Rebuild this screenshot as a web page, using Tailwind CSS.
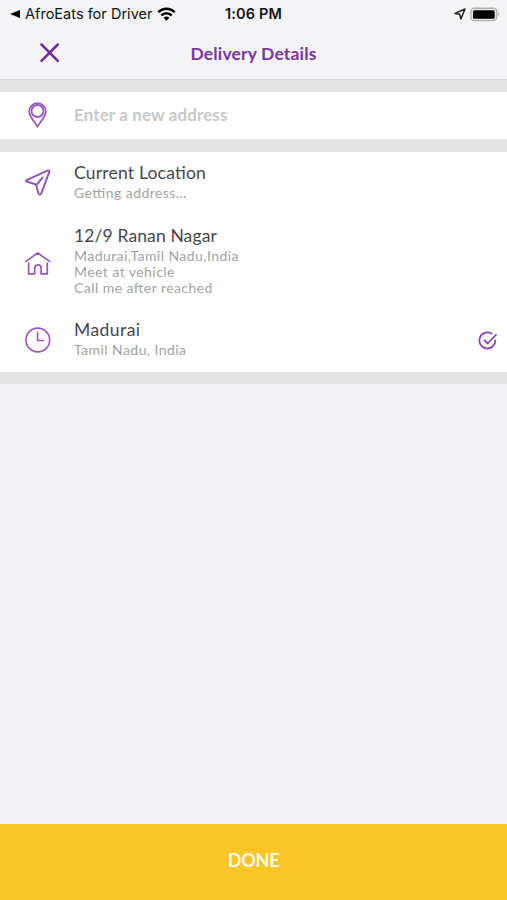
<!DOCTYPE html>
<html lang="en">
<head>
<meta charset="utf-8">
<meta name="viewport" content="width=device-width, initial-scale=1">
<title>Delivery Details</title>
<script src="https://cdn.jsdelivr.net/npm/@tailwindcss/browser@4"></script>
</head>
<body class="flex h-[900px] w-[507px] flex-col overflow-hidden bg-[#f1f1f4] font-['Lato',sans-serif] whitespace-nowrap">
  <header class="h-[79.5px] shrink-0 border-b-[1.5px] border-[#d8d8da] bg-[#f4f4f7]">
    <div class="grid h-7 grid-cols-[1fr_auto_1fr] items-center pr-[7px] pl-[10px] font-['Inter',sans-serif] text-[#111]">
      <div class="flex items-center">
        <svg class="h-2 w-[10px]" viewBox="0 0 10 8"><path d="M0 4 10 0V8Z" fill="#000"/></svg>
        <span class="ml-[5px] text-[14.5px] tracking-[0.02px]">AfroEats for Driver</span>
        <svg class="ml-[5px] h-[14px] w-[19px]" viewBox="0 0 19 14" fill="none" stroke="#000" stroke-width="2.5"><path d="M1.3 5.2C6 .5 13 .5 17.7 5.2M4.3 8.3C7.3 5.4 11.7 5.4 14.7 8.3"/><path d="M6.6 10.7C8.3 9.2 10.7 9.2 12.4 10.7L9.5 13.7Z" fill="#000" stroke="none"/></svg>
      </div>
      <span class="-ml-[3px] text-[14.5px] font-semibold tracking-[0.15px]">1:06 PM</span>
      <div class="flex items-center justify-end">
        <svg class="mr-[4px] h-3 w-3" viewBox="0 0 12 12" fill="none" stroke="#222" stroke-width="1.5" stroke-linejoin="round"><path d="M1 5.4 11 1 6.9 11 5.7 6.2Z"/></svg>
        <svg class="h-[15px] w-[30px]" viewBox="0 0 30 15"><rect x=".8" y="1.2" width="26" height="12.4" rx="3.6" fill="#e8e8e6" stroke="#b2b2b0" stroke-width="1.4"/><rect x="3" y="3.2" width="21.7" height="8.6" rx="1.6" fill="#000"/><path d="M28.2 5.4Q30.2 7.4 28.2 9.4Z" fill="#aaa"/></svg>
      </div>
    </div>
    <div class="grid h-[50px] grid-cols-[1fr_auto_1fr] items-center">
      <svg class="ml-[40px] h-5 w-5" viewBox="0 0 20 20" fill="none" stroke="#752ba0" stroke-width="2.5" stroke-linecap="round"><path d="M1.5 1.5 17.8 17.8M17.8 1.5 1.5 17.8"/></svg>
      <h1 class="pt-[2px] text-[17.5px] font-bold tracking-[0.16px] text-[#7a35a5]">Delivery Details</h1>
    </div>
  </header>

  <main class="shrink-0">
    <div class="h-3 bg-[#e4e4e4]"></div>
    <div class="flex h-[47.5px] items-center bg-white">
      <svg class="ml-[28px] h-[26px] w-[19px]" viewBox="0 0 19 26" fill="none" stroke="#9857be" stroke-width="1.8" stroke-linejoin="round"><path d="M9.5 24.6C7.3 20.3 1.2 15 1.2 9.4A8.3 8.3 0 0 1 17.8 9.4C17.8 15 11.7 20.3 9.5 24.6Z"/><circle cx="9.5" cy="9" r="6"/></svg>
      <span class="ml-[27px] pb-[2px] text-[17px] font-bold tracking-[0.12px] text-[#c8c8c8]">Enter a new address</span>
    </div>
    <div class="h-[13px] bg-[#e4e4e4]"></div>

    <ul class="h-[220px] bg-white pt-[10px] text-[14px] leading-4 tracking-[0.44px] text-[#a3a3a3] [font-feature-settings:'liga']">
      <li class="flex h-[63px]">
        <svg class="mt-[7px] ml-[25px] h-[27px] w-[26px]" viewBox="0 0 26 27" fill="none" stroke="#9350bd" stroke-width="1.9" stroke-linejoin="round" stroke-linecap="round"><path d="M1.5 11.1 23 1.4Q24.8 1 24.3 2.8L16.2 24.6Q14.8 26.5 13.5 24.4L11.3 16.8Q11 15.6 9.4 15L2 12.7Q.2 12 1.5 11.1ZM11.2 16.2 17.6 8.6"/></svg>
        <div class="ml-[23px]">
          <h2 class="text-[17.5px] leading-[22px] tracking-[0.2px] text-[#48484b]">Current Location</h2>
          <p class="pt-px">Getting address...</p>
        </div>
      </li>
      <li class="flex h-[94px]">
        <svg class="mt-[26px] ml-[25px] h-[24px] w-[26px]" viewBox="0 0 26 24" fill="none" stroke="#9857be" stroke-width="1.7" stroke-linejoin="round" stroke-linecap="round"><path d="M1 10.4 12.7 2 24.7 10.4M3.6 12V22.9H9.7V17.2C9.7 12.8 16.1 12.8 16.1 17.2V22.9H22.3V12"/></svg>
        <div class="ml-[23px]">
          <h2 class="text-[17.5px] leading-[22px] tracking-[0.12px] text-[#48484b]">12/9 Ranan Nagar</h2>
          <p class="pt-px">Madurai,Tamil Nadu,India<br>Meet at vehicle<br>Call me after reached</p>
        </div>
      </li>
      <li class="flex">
        <svg class="mt-[8px] ml-[25px] h-[26px] w-[26px]" viewBox="0 0 26 26" fill="none" stroke="#9857be" stroke-width="1.6"><circle cx="12.8" cy="13" r="11.9"/><path d="M12.6 4.8V13.5H19"/></svg>
        <div class="ml-[23px] grow">
          <h2 class="text-[17.5px] leading-[22px] tracking-[0.45px] text-[#48484b]">Madurai</h2>
          <p class="pt-px">Tamil Nadu, India</p>
        </div>
        <svg class="mt-[12px] mr-[9px] h-[20px] w-[20px]" viewBox="0 0 20 20" fill="none" stroke="#8d48b5" stroke-width="1.8" stroke-linecap="round" stroke-linejoin="round"><path d="M13.5 2.6A8 8 0 1 0 17.4 9.3M6.5 9.3 9.7 12.5 18 3.8"/></svg>
      </li>
    </ul>
    <div class="h-3 bg-[#e4e4e4]"></div>
  </main>

  <button class="mt-auto flex h-[76px] shrink-0 items-center justify-center bg-[#fcc526] pb-1 text-[18px] font-bold tracking-[-0.2px] text-[#fffbea]">DONE</button>
</body>
</html>
